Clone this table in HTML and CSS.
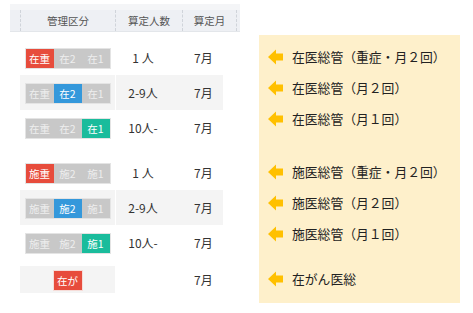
FILE: index.html
```html
<!DOCTYPE html>
<html lang="ja">
<head>
  <meta charset="UTF-8" />
  <title>管理区分</title>
  <link rel="stylesheet" href="styles.css">
</head>
<body>
  <div class="page">

    <div class="table">
      <div class="thead">
        <div class="th th-pad"></div>
        <div class="th th-kind">管理区分</div>
        <div class="th th-count">算定人数</div>
        <div class="th th-month">算定月</div>
        <div class="th th-end"></div>
      </div>

      <div class="group">
        <div class="row">
          <div class="kind">
            <div class="badges"><span class="b red">在重</span><span class="b">在2</span><span class="b">在1</span></div>
          </div>
          <div class="vals"><span class="count">1 人</span><span class="month">7月</span></div>
        </div>
        <div class="row shaded">
          <div class="kind">
            <div class="badges"><span class="b">在重</span><span class="b blue">在2</span><span class="b">在1</span></div>
          </div>
          <div class="vals"><span class="count">2-9人</span><span class="month">7月</span></div>
        </div>
        <div class="row">
          <div class="kind">
            <div class="badges"><span class="b">在重</span><span class="b">在2</span><span class="b green">在1</span></div>
          </div>
          <div class="vals"><span class="count">10人-</span><span class="month">7月</span></div>
        </div>
      </div>

      <div class="group">
        <div class="row">
          <div class="kind">
            <div class="badges"><span class="b red">施重</span><span class="b">施2</span><span class="b">施1</span></div>
          </div>
          <div class="vals"><span class="count">1 人</span><span class="month">7月</span></div>
        </div>
        <div class="row shaded">
          <div class="kind">
            <div class="badges"><span class="b">施重</span><span class="b blue">施2</span><span class="b">施1</span></div>
          </div>
          <div class="vals"><span class="count">2-9人</span><span class="month">7月</span></div>
        </div>
        <div class="row">
          <div class="kind">
            <div class="badges"><span class="b">施重</span><span class="b">施2</span><span class="b green">施1</span></div>
          </div>
          <div class="vals"><span class="count">10人-</span><span class="month">7月</span></div>
        </div>
      </div>

      <div class="row row-last">
        <div class="kind">
          <div class="badges single"><span class="b red">在が</span></div>
        </div>
        <div class="vals"><span class="count"></span><span class="month">7月</span></div>
      </div>
    </div>

    <div class="legend">
      <div class="item">
        <svg class="arrow" viewBox="0 0 15 16"><path d="M0 8 L8 0.5 L8 4.5 L15 4.5 L15 11.5 L8 11.5 L8 15.5 Z"/></svg>
        <span>在医総管（重症・月２回）</span>
      </div>
      <div class="item">
        <svg class="arrow" viewBox="0 0 15 16"><path d="M0 8 L8 0.5 L8 4.5 L15 4.5 L15 11.5 L8 11.5 L8 15.5 Z"/></svg>
        <span>在医総管（月２回）</span>
      </div>
      <div class="item">
        <svg class="arrow" viewBox="0 0 15 16"><path d="M0 8 L8 0.5 L8 4.5 L15 4.5 L15 11.5 L8 11.5 L8 15.5 Z"/></svg>
        <span>在医総管（月１回）</span>
      </div>
      <div class="item gap">
        <svg class="arrow" viewBox="0 0 15 16"><path d="M0 8 L8 0.5 L8 4.5 L15 4.5 L15 11.5 L8 11.5 L8 15.5 Z"/></svg>
        <span>施医総管（重症・月２回）</span>
      </div>
      <div class="item">
        <svg class="arrow" viewBox="0 0 15 16"><path d="M0 8 L8 0.5 L8 4.5 L15 4.5 L15 11.5 L8 11.5 L8 15.5 Z"/></svg>
        <span>施医総管（月２回）</span>
      </div>
      <div class="item">
        <svg class="arrow" viewBox="0 0 15 16"><path d="M0 8 L8 0.5 L8 4.5 L15 4.5 L15 11.5 L8 11.5 L8 15.5 Z"/></svg>
        <span>施医総管（月１回）</span>
      </div>
      <div class="item gap-last">
        <svg class="arrow" viewBox="0 0 15 16"><path d="M0 8 L8 0.5 L8 4.5 L15 4.5 L15 11.5 L8 11.5 L8 15.5 Z"/></svg>
        <span>在がん医総</span>
      </div>
    </div>

  </div>
</body>
</html>
```

FILE: styles.css
```css
html, body {
  margin: 0;
  padding: 0;
}

body {
  background: #fff;
  font-family: "Noto Sans CJK JP", "Noto Sans", sans-serif;
  color: #333;
}

.page {
  display: flex;
  align-items: flex-start;
  padding: 4px 0 0 10px;
}

/* table */

.table {
  width: 230px;
}

.thead {
  display: flex;
  height: 21px;
  border-top: 6px solid #f4f5f7;
  border-bottom: 1px solid #e3e6ea;
  background: #eef0f4;
  font-size: 10.5px;
  color: #555;
}

.th {
  display: flex;
  align-items: center;
  justify-content: center;
  border-left: 1px dashed #d0d4da;
}

.th-pad { width: 10px; border-left: none; }
.th-kind { width: 94px; }
.th-count { width: 66px; }
.th-month { width: 53px; }
.th-end { flex: 1; }

.group {
  margin-top: 8px;
}

.group + .group {
  margin-top: 10px;
}

.row {
  display: flex;
  height: 35px;
  margin-left: 10px;
  font-size: 12px;
}

.kind {
  width: 95px;
  display: flex;
  align-items: center;
  justify-content: center;
  padding-top: 2px;
  box-sizing: border-box;
}

.vals {
  display: flex;
  align-items: center;
  margin-left: 1px;
  width: 107px;
}

.shaded .kind,
.shaded .vals {
  background: #f4f4f4;
}

.count {
  width: 54px;
  text-align: center;
}

.month {
  padding-left: 24px;
}

.row-last {
  height: 27px;
  margin-top: 6px;
}

.row-last .kind {
  background: #f4f4f4;
  padding-top: 1px;
}

/* badges */

.badges {
  display: flex;
  border: 1px solid #e4e4e4;
}

.badges.single {
  border-color: #f6dcd8;
}

.b {
  width: 28px;
  height: 19px;
  line-height: 19px;
  text-align: center;
  font-size: 10.5px;
  color: #eee;
  background: #c8c8c8;
}

.b.red { background: #e74c3c; color: #fff; }
.b.blue { background: #3498db; color: #fff; }
.b.green { background: #1abc9c; color: #fff; }

/* legend */

.legend {
  margin: 31px 0 0 19px;
  width: 201px;
  height: 268px;
  box-sizing: border-box;
  padding: 6px 0 0 9px;
  background: #fef0cb;
  font-size: 12.8px;
  color: #222;
}

.item {
  display: flex;
  align-items: center;
  height: 31px;
}

.item.gap {
  margin-top: 22px;
}

.item.gap-last {
  margin-top: 14px;
}

.arrow {
  width: 15px;
  height: 16px;
  margin-right: 9px;
  fill: #ffc000;
  flex-shrink: 0;
}
```
